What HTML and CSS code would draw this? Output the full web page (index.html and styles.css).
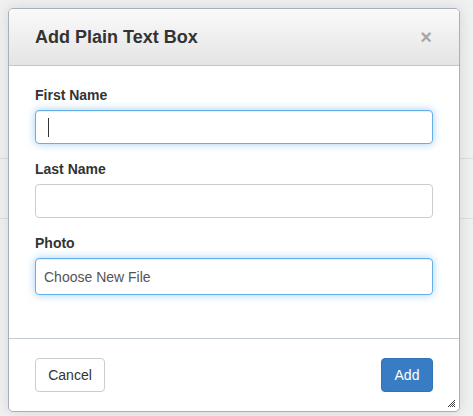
FILE: index.html
```html
<!DOCTYPE html>
<html>
<head>
<meta charset="utf-8">
<link rel="stylesheet" href="styles.css">
</head>
<body>
<div class="modal">
  <div class="modal-header">
    <h4 class="modal-title">Add Plain Text Box</h4>
    <span class="close">&times;</span>
  </div>
  <div class="modal-body">
    <div class="group">
      <label class="label">First Name</label>
      <div class="field focused"><span class="caret"></span></div>
    </div>
    <div class="group">
      <label class="label">Last Name</label>
      <div class="field"></div>
    </div>
    <div class="group">
      <label class="label">Photo</label>
      <div class="field focused tall"><span class="file-text">Choose New File</span></div>
    </div>
  </div>
  <div class="modal-footer">
    <button class="btn">Cancel</button>
    <button class="btn btn-primary">Add</button>
  </div>
  <svg class="grip" width="9" height="9" viewBox="0 0 9 9">
    <path d="M8 1L1 8M8 3L3 8M8 5L5 8M8 7L7 8" stroke="#444" stroke-width="1"/>
  </svg>
</div>
</body>
</html>
```

FILE: styles.css
```css
html, body {
  margin: 0;
  padding: 0;
}
body {
  width: 473px;
  height: 416px;
  padding: 8px;
  box-sizing: border-box;
  font-family: "Liberation Sans", Arial, sans-serif;
  color: #333;
  background-color: #f1f1f1;
  background-image:
    linear-gradient(#dedede, #dedede),
    linear-gradient(#dedede, #dedede);
  background-size: 100% 1px, 100% 1px;
  background-position: 0 158px, 0 218px;
  background-repeat: no-repeat;
  overflow: hidden;
}
.modal {
  position: relative;
  width: 452px;
  height: 404px;
  box-sizing: border-box;
  background: #fff;
  border: 1px solid #a7b1bd;
  border-radius: 5px;
  box-shadow: 0 0 14px rgba(0, 0, 0, 0.12);
  display: flex;
  flex-direction: column;
  overflow: hidden;
}
.modal-header {
  height: 56px;
  flex: none;
  border-bottom: 1px solid #c2c6cc;
  background: linear-gradient(#fafafa, #e4e4e4);
  display: flex;
  align-items: center;
  justify-content: space-between;
  padding: 0 27px 0 26px;
}
.modal-title {
  margin: 0;
  font-size: 18px;
  font-weight: bold;
  color: #333;
  line-height: 20px;
}
.close {
  font-size: 20px;
  font-weight: bold;
  color: #000;
  opacity: 0.3;
  line-height: 20px;
}
.modal-body {
  height: 272px;
  flex: none;
  box-sizing: border-box;
  padding: 19px 26px 0 26px;
}
.group {
  margin-bottom: 15px;
}
.label {
  display: block;
  font-size: 14px;
  font-weight: bold;
  line-height: 20px;
  margin-bottom: 5px;
  color: #333;
}
.field {
  height: 34px;
  box-sizing: border-box;
  border: 1px solid #ccc;
  border-radius: 4px;
  display: flex;
  align-items: center;
  background: #fff;
}
.field.focused {
  border-color: #66afe9;
  box-shadow: inset 0 1px 1px rgba(0, 0, 0, 0.075), 0 0 8px rgba(102, 175, 233, 0.6);
}
.field.tall {
  height: 37px;
}
.caret {
  display: block;
  width: 1px;
  height: 19px;
  margin-left: 12px;
  background: #333;
}
.file-text {
  margin-left: 8px;
  font-size: 14px;
  color: #555;
}
.modal-footer {
  flex: 1;
  border-top: 1px solid #c4cbd3;
  padding: 19px 26px;
  display: flex;
  justify-content: space-between;
  align-items: flex-start;
}
.btn {
  height: 34px;
  box-sizing: border-box;
  border: 1px solid #ccc;
  border-radius: 4px;
  background: #fff;
  color: #333;
  font-family: "Liberation Sans", Arial, sans-serif;
  font-size: 14px;
  padding: 0 12px;
  width: 70px;
}
.btn-primary {
  width: 52px;
  background: #387dc3;
  border-color: #3272b5;
  color: #fff;
}
.grip {
  position: absolute;
  right: 3px;
  bottom: 3px;
}
```
